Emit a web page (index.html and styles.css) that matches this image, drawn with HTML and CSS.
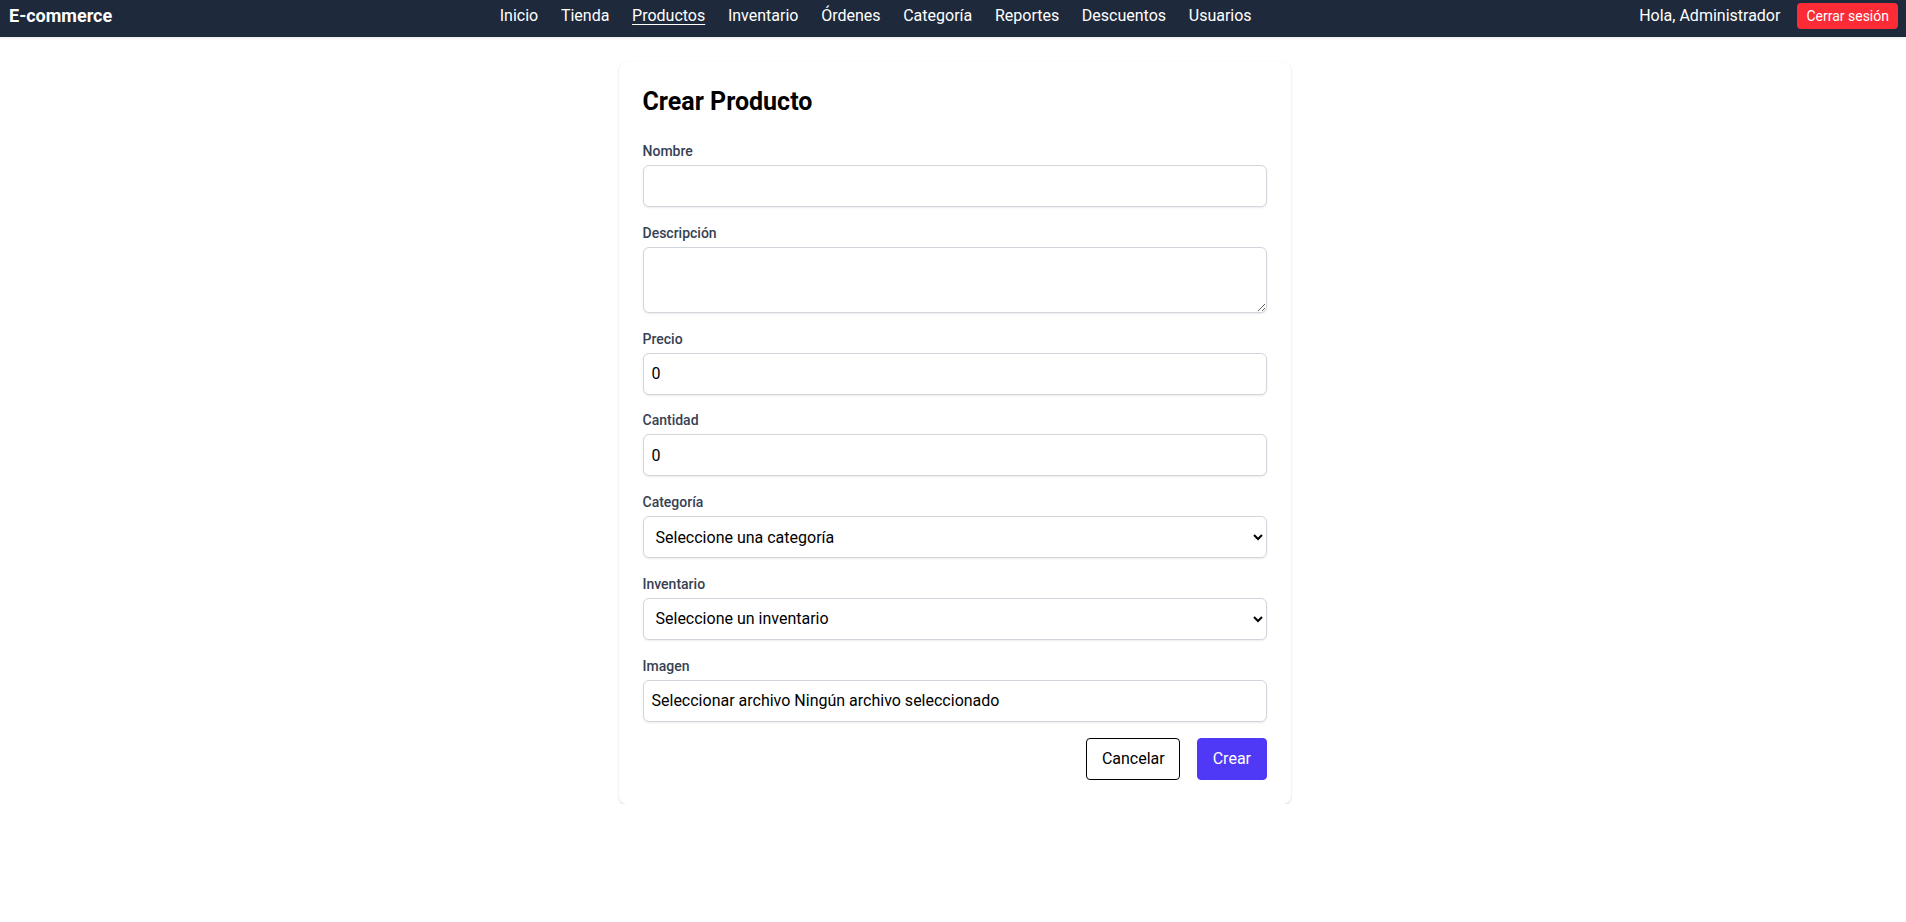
FILE: index.html
```html
<!DOCTYPE html>
<html lang="es">
<head>
<meta charset="utf-8">
<title>Crear Producto</title>
<link rel="stylesheet" href="styles.css">
</head>
<body>
<nav class="navbar">
  <div class="navbar-row">
    <a class="brand" href="#">E-commerce</a>
    <ul class="nav-links">
      <li><a href="#">Inicio</a></li>
      <li><a href="#">Tienda</a></li>
      <li><a href="#" class="active">Productos</a></li>
      <li><a href="#">Inventario</a></li>
      <li><a href="#">Órdenes</a></li>
      <li><a href="#">Categoría</a></li>
      <li><a href="#">Reportes</a></li>
      <li><a href="#">Descuentos</a></li>
      <li><a href="#">Usuarios</a></li>
    </ul>
    <div class="user-area">
      <span class="greeting">Hola, Administrador</span>
      <button class="logout" type="button">Cerrar sesión</button>
    </div>
  </div>
</nav>

<main class="page">
  <form class="card">
    <h1 class="title">Crear Producto</h1>

    <div class="field">
      <label class="label" for="nombre">Nombre</label>
      <input class="control" id="nombre" type="text">
    </div>

    <div class="field">
      <label class="label" for="descripcion">Descripción</label>
      <textarea class="control textarea" id="descripcion" rows="2"></textarea>
    </div>

    <div class="field">
      <label class="label" for="precio">Precio</label>
      <input class="control" id="precio" type="text" value="0">
    </div>

    <div class="field">
      <label class="label" for="cantidad">Cantidad</label>
      <input class="control" id="cantidad" type="text" value="0">
    </div>

    <div class="field">
      <label class="label" for="categoria">Categoría</label>
      <select class="control select" id="categoria">
        <option>Seleccione una categoría</option>
      </select>
    </div>

    <div class="field">
      <label class="label" for="inventario">Inventario</label>
      <select class="control select" id="inventario">
        <option>Seleccione un inventario</option>
      </select>
    </div>

    <div class="field">
      <span class="label">Imagen</span>
      <div class="control file">Seleccionar archivo Ningún archivo seleccionado</div>
    </div>

    <div class="actions">
      <button class="btn btn-cancel" type="button">Cancelar</button>
      <button class="btn btn-primary" type="button">Crear</button>
    </div>
  </form>
</main>
</body>
</html>
```

FILE: styles.css
```css
* {
  box-sizing: border-box;
}

html, body {
  margin: 0;
  padding: 0;
  background: #ffffff;
  font-family: Roboto, "Noto Sans", "Liberation Sans", sans-serif;
  color: #000000;
}

.navbar {
  background: #1e293b;
  height: 37px;
  padding: 0 8px 0 9px;
  box-shadow: 0 1px 3px rgba(0, 0, 0, 0.1);
}

.navbar-row {
  height: 31px;
  display: flex;
  align-items: center;
  justify-content: space-between;
}

.brand {
  color: #ffffff;
  font-size: 18px;
  font-weight: 700;
  text-decoration: none;
  line-height: 28px;
}

.nav-links {
  list-style: none;
  margin: 0;
  padding: 0;
  display: flex;
  gap: 22.7px;
}

.nav-links a {
  color: #ffffff;
  text-decoration: none;
  font-size: 16px;
  line-height: 24px;
}

.nav-links a.active {
  text-decoration: underline;
  text-underline-offset: 3px;
}

.user-area {
  display: flex;
  align-items: center;
  gap: 17px;
}

.greeting {
  color: #ffffff;
  font-size: 16px;
  line-height: 24px;
}

.logout {
  background: #fb2c36;
  color: #ffffff;
  border: 0;
  border-radius: 4px;
  font-family: inherit;
  font-size: 14px;
  line-height: 20px;
  padding: 3px 9px;
  cursor: pointer;
}

.page {
  padding-top: 25px;
  display: flex;
  justify-content: center;
}

.card {
  width: 672px;
  margin-left: 3px;
  background: #ffffff;
  border-radius: 8px;
  box-shadow: 0 1px 3px rgba(0, 0, 0, 0.1), 0 1px 2px rgba(0, 0, 0, 0.06);
  padding: 24px;
}

.title {
  margin: 0 0 23px;
  font-size: 25px;
  line-height: 32px;
  font-weight: 700;
}

.field {
  margin-bottom: 15.8px;
}

.label {
  display: block;
  font-size: 14px;
  line-height: 20px;
  font-weight: 500;
  color: #364153;
  margin-bottom: 4px;
}

.control {
  display: block;
  width: 100%;
  height: 42px;
  border: 1px solid #d1d5dc;
  border-radius: 6px;
  box-shadow: 0 1px 2px rgba(0, 0, 0, 0.08);
  padding: 8px;
  font-family: inherit;
  font-size: 16px;
  line-height: 24px;
  color: #000000;
  background: #ffffff;
}

.textarea {
  height: 66px;
  resize: vertical;
}

.select {
  padding: 8px 6px 8px 8px;
}

.file {
  white-space: nowrap;
}

.actions {
  display: flex;
  justify-content: flex-end;
  gap: 17px;
}

.btn {
  font-family: inherit;
  font-size: 16px;
  line-height: 24px;
  padding: 8px 14.5px;
  border-radius: 4px;
  cursor: pointer;
}

.btn-cancel {
  background: #ffffff;
  color: #000000;
  border: 1px solid #000000;
}

.btn-primary {
  background: #4f39f6;
  color: #ffffff;
  border: 1px solid #4f39f6;
}
```
